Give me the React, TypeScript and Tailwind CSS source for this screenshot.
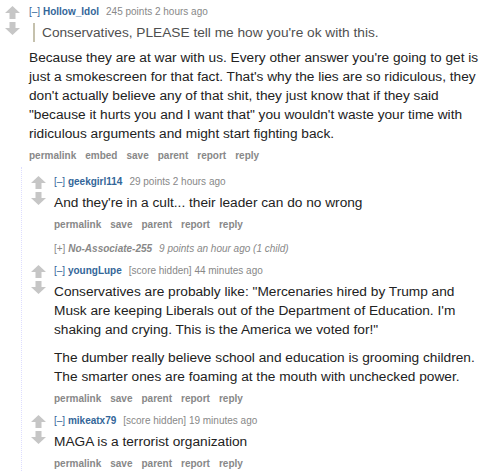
import React from 'react';

// old-reddit style comment thread

const Arrows: React.FC<{ top?: string }> = ({ top = 'pt-[6px]' }) => (
  <div className={`flex flex-col items-start gap-[3px] ${top}`}>
    <svg width="15" height="13" viewBox="0 0 15 13">
      <polygon points="7.5,0 15,7 10.5,7 10.5,13 4.5,13 4.5,7 0,7" fill="#c6c6c6" />
    </svg>
    <svg width="15" height="13" viewBox="0 0 15 13">
      <polygon points="7.5,13 15,6 10.5,6 10.5,0 4.5,0 4.5,6 0,6" fill="#c6c6c6" />
    </svg>
  </div>
);

interface TaglineProps {
  author: string;
  meta: string;
}

const Tagline: React.FC<TaglineProps> = ({ author, meta }) => (
  <div className="text-[10px] leading-[14px] text-[#888]">
    <span className="text-[#369]">[–]</span>{' '}
    <span className="font-bold text-[#369] mr-[7px]">{author}</span>
    {meta}
  </div>
);

const Buttons: React.FC<{ embed?: boolean }> = ({ embed }) => {
  const items = embed
    ? ['permalink', 'embed', 'save', 'parent', 'report', 'reply']
    : ['permalink', 'save', 'parent', 'report', 'reply'];
  return (
    <div className="flex gap-[9px] text-[10px] leading-[14px] font-bold text-[#888]">
      {items.map((item) => (
        <span key={item}>{item}</span>
      ))}
    </div>
  );
};

interface ChildProps {
  author: string;
  meta: string;
  paragraphs: string[];
}

const ChildComment: React.FC<ChildProps> = ({ author, meta, paragraphs }) => (
  <div className="flex">
    <div className="w-[32px] pl-[9px]">
      <Arrows top="pt-[9px]" />
    </div>
    <div className="flex-1 pr-[5px] pt-[8px]">
      <Tagline author={author} meta={meta} />
      <div className="mt-[4px] mb-[6px] flex flex-col gap-[9px] text-[13.7px] leading-[19px] text-[#222]">
        {paragraphs.map((p, i) => (
          <p key={i}>{p}</p>
        ))}
      </div>
      <Buttons />
    </div>
  </div>
);

export default function App() {
  return (
    <div className="w-[489px] h-[471px] overflow-hidden bg-white font-['Liberation_Sans',Arial,sans-serif]">
      <div className="flex">
        <div className="w-[29px] pl-[5px]">
          <Arrows />
        </div>
        <div className="flex-1 pr-[3px] pt-[5px]">
          <Tagline author="Hollow_Idol" meta="245 points 2 hours ago" />
          <div className="mt-[4px] ml-[4px] border-l-2 border-[#c5c1ad] pl-[7px] text-[13.7px] leading-[19px] text-[#4f4f4f]">
            Conservatives, PLEASE tell me how you're ok with this.
          </div>
          <p className="mt-[6px] mb-[6px] text-[13.7px] leading-[19px] text-[#222]">
            Because they are at war with us. Every other answer you're going to get is just a smokescreen for
            that fact. That's why the lies are so ridiculous, they don't actually believe any of that shit, they
            just know that if they said "because it hurts you and I want that" you wouldn't waste your time with
            ridiculous arguments and might start fighting back.
          </p>
          <Buttons embed />
        </div>
      </div>

      <div className="ml-[21px] mt-[4px] border-l border-dotted border-[#ddf]">
        <ChildComment
          author="geekgirl114"
          meta="29 points 2 hours ago"
          paragraphs={['And they\'re in a cult... their leader can do no wrong']}
        />
        <div className="pl-[32px] pt-[10px] text-[10px] leading-[14px] text-[#888] italic">
          <span className="not-italic">[+]</span>{' '}
          <span className="font-bold text-[#888] mr-[7px]">No-Associate-255</span>
          9 points an hour ago (1 child)
        </div>
        <ChildComment
          author="youngLupe"
          meta="[score hidden] 44 minutes ago"
          paragraphs={[
            'Conservatives are probably like: "Mercenaries hired by Trump and Musk are keeping Liberals out of the Department of Education. I\'m shaking and crying. This is the America we voted for!"',
            'The dumber really believe school and education is grooming children. The smarter ones are foaming at the mouth with unchecked power.',
          ]}
        />
        <ChildComment
          author="mikeatx79"
          meta="[score hidden] 19 minutes ago"
          paragraphs={['MAGA is a terrorist organization']}
        />
      </div>
    </div>
  );
}
